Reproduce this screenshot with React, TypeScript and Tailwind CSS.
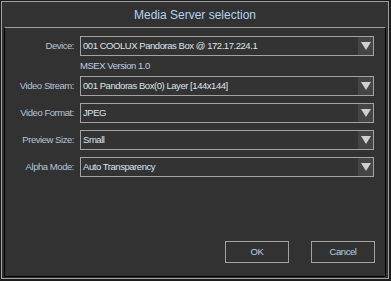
const font = { fontFamily: '"Liberation Sans", Arial, sans-serif' };

function Combo({ value }: { value: string }) {
  return (
    <div className="flex h-[20px] w-[294px] items-stretch border border-[#a3a3a3] bg-[#333333]">
      <div className="flex flex-1 items-center truncate pl-[2px] text-[9.5px] tracking-[-0.45px] text-[#dde4ec]">{value}</div>
      <div className="flex w-[15px] items-center justify-center bg-[#454545]">
        <svg width="10" height="8" viewBox="0 0 10 8">
          <polygon points="0,0 10,0 5,8" fill="#cfcfcf" />
        </svg>
      </div>
    </div>
  );
}

function Row({ label, value }: { label: string; value: string }) {
  return (
    <div className="flex h-[20px] items-center">
      <div className="w-[69px] whitespace-nowrap text-right text-[9.5px] tracking-[-0.45px] text-[#b2c5d9]">{label}</div>
      <div className="ml-[6px]">
        <Combo value={value} />
      </div>
    </div>
  );
}

export default function App() {
  return (
    <div className="h-[281px] w-[391px] bg-[#1c1c1c] pl-[1px] pt-[1px]" style={font}>
      <div className="flex h-[278px] w-[388px] flex-col border border-[#a0a0a0] bg-[#323232]">
        <div className="flex h-[25px] items-center justify-center text-[12px] text-[#b4d2f2]">
          Media Server selection
        </div>
        <div className="mx-[2px] flex h-[250px] flex-col border border-t-[#a0a0a0] border-l-black border-r-black border-b-black pt-[8px] pb-[13px]">
          <Row label="Device:" value="001 COOLUX Pandoras Box @ 172.17.224.1" />
          <div className="flex h-[20px] items-center pl-[75px] text-[9.5px] tracking-[-0.45px] text-[#bccfe2]">MSEX Version 1.0</div>
          <div className="flex flex-col gap-[7px]">
            <Row label="Video Stream:" value="001 Pandoras Box(0) Layer [144x144]" />
            <Row label="Video Format:" value="JPEG" />
            <Row label="Preview Size:" value="Small" />
            <Row label="Alpha Mode:" value="Auto Transparency" />
          </div>
          <div className="mt-auto flex justify-end gap-[22px] pr-[10px]">
            <button className="h-[22px] w-[64px] border border-[#a3a3a3] text-[9.5px] tracking-[-0.45px] text-[#bccfe2]">OK</button>
            <button className="h-[22px] w-[64px] border border-[#a3a3a3] text-[9.5px] tracking-[-0.45px] text-[#bccfe2]">Cancel</button>
          </div>
        </div>
      </div>
    </div>
  );
}
